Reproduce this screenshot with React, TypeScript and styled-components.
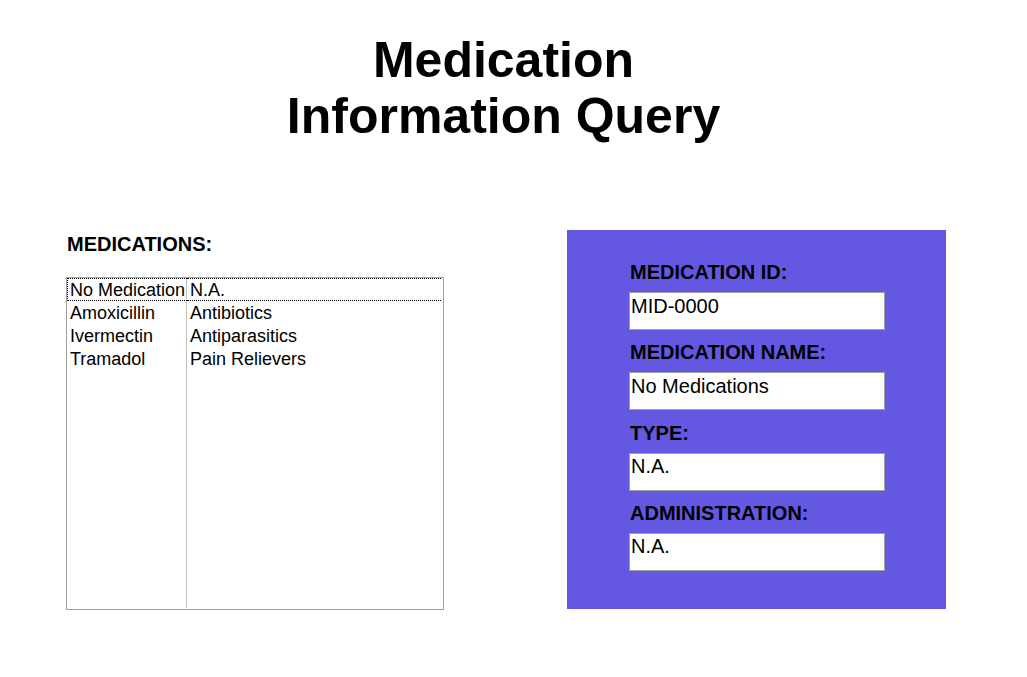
import React, { useState } from "react";
import styled, { createGlobalStyle } from "styled-components";

const GlobalStyle = createGlobalStyle`
  *, *::before, *::after { box-sizing: border-box; }
  body {
    margin: 0;
    background: #ffffff;
    color: #000000;
    font-family: "Liberation Sans", Arial, sans-serif;
  }
`;

const Page = styled.main`
  padding: 32px 81px 64px 66px;
`;

const Title = styled.h1`
  margin: 0;
  padding-right: 5px;
  font-size: 50px;
  line-height: 56px;
  font-weight: bold;
  text-align: center;
`;

const Content = styled.div`
  display: grid;
  grid-template-columns: minmax(0, 378fr) minmax(0, 379fr);
  column-gap: 123px;
  margin-top: 86px;
`;

const ListSection = styled.section`
  display: flex;
  flex-direction: column;
  min-height: 380px;
  padding-top: 2px;
`;

const ListHeading = styled.h2`
  margin: 0 0 21px;
  padding-left: 1px;
  font-size: 20px;
  line-height: 24px;
  font-weight: bold;
`;

const ListBox = styled.div`
  flex: 1;
  border: 1px solid #a0a0a0;
  padding-right: 2px;
  background: linear-gradient(#c0c0c0, #c0c0c0) 119px 0 / 1px calc(100% - 1px) no-repeat;
`;

const MedicationTable = styled.table`
  width: 100%;
  table-layout: fixed;
  border-spacing: 0;
  font-size: 18px;
  line-height: 19px;
`;

const NameColumn = styled.col`
  width: 120px;
`;

const Cell = styled.td<{ $current: boolean }>`
  padding: 2px 0 0 3px;
  border: 1px dotted ${(p) => (p.$current ? "#000000" : "transparent")};
  border-width: 1px 0;
  white-space: nowrap;
  cursor: default;

  &:first-child {
    padding-left: 2px;
    border-left-width: 1px;
  }
`;

const DetailPanel = styled.form`
  display: flex;
  flex-direction: column;
  justify-content: space-between;
  align-self: start;
  min-height: 379px;
  padding: 30px 61px 38px 62px;
  background: #6457e2;
`;

const Field = styled.div`
  display: flex;
  flex-direction: column;
  gap: 8px;
`;

const FieldLabel = styled.label`
  padding-left: 1px;
  font-size: 20px;
  line-height: 24px;
  font-weight: bold;
`;

const FieldInput = styled.input`
  width: 100%;
  height: 38px;
  padding: 0 1px 10px;
  border: 1px solid #a0a0a0;
  border-radius: 0;
  outline: none;
  background: #ffffff;
  color: #000000;
  font-family: inherit;
  font-size: 20px;
  line-height: 24px;
`;

const medications = [
  { id: "MID-0000", listName: "No Medication", name: "No Medications", type: "N.A.", administration: "N.A." },
  { id: "MID-0001", listName: "Amoxicillin", name: "Amoxicillin", type: "Antibiotics", administration: "Oral" },
  { id: "MID-0002", listName: "Ivermectin", name: "Ivermectin", type: "Antiparasitics", administration: "Oral" },
  { id: "MID-0003", listName: "Tramadol", name: "Tramadol", type: "Pain Relievers", administration: "Oral" },
];

export default function App() {
  const [current, setCurrent] = useState(0);
  const selected = medications[current];
  const fields = [
    { key: "id", label: "MEDICATION ID:", value: selected.id },
    { key: "name", label: "MEDICATION NAME:", value: selected.name },
    { key: "type", label: "TYPE:", value: selected.type },
    { key: "administration", label: "ADMINISTRATION:", value: selected.administration },
  ];

  return (
    <>
      <GlobalStyle />
      <Page>
        <Title>
          Medication
          <br />
          Information Query
        </Title>
        <Content>
          <ListSection>
            <ListHeading id="medications-heading">MEDICATIONS:</ListHeading>
            <ListBox>
              <MedicationTable aria-labelledby="medications-heading">
                <colgroup>
                  <NameColumn />
                  <col />
                </colgroup>
                <tbody>
                  {medications.map((item, index) => (
                    <tr key={item.id} onClick={() => setCurrent(index)}>
                      <Cell $current={index === current}>{item.listName}</Cell>
                      <Cell $current={index === current}>{item.type}</Cell>
                    </tr>
                  ))}
                </tbody>
              </MedicationTable>
            </ListBox>
          </ListSection>
          <DetailPanel>
            {fields.map((field) => (
              <Field key={field.key}>
                <FieldLabel htmlFor={field.key}>{field.label}</FieldLabel>
                <FieldInput id={field.key} type="text" readOnly value={field.value} />
              </Field>
            ))}
          </DetailPanel>
        </Content>
      </Page>
    </>
  );
}
